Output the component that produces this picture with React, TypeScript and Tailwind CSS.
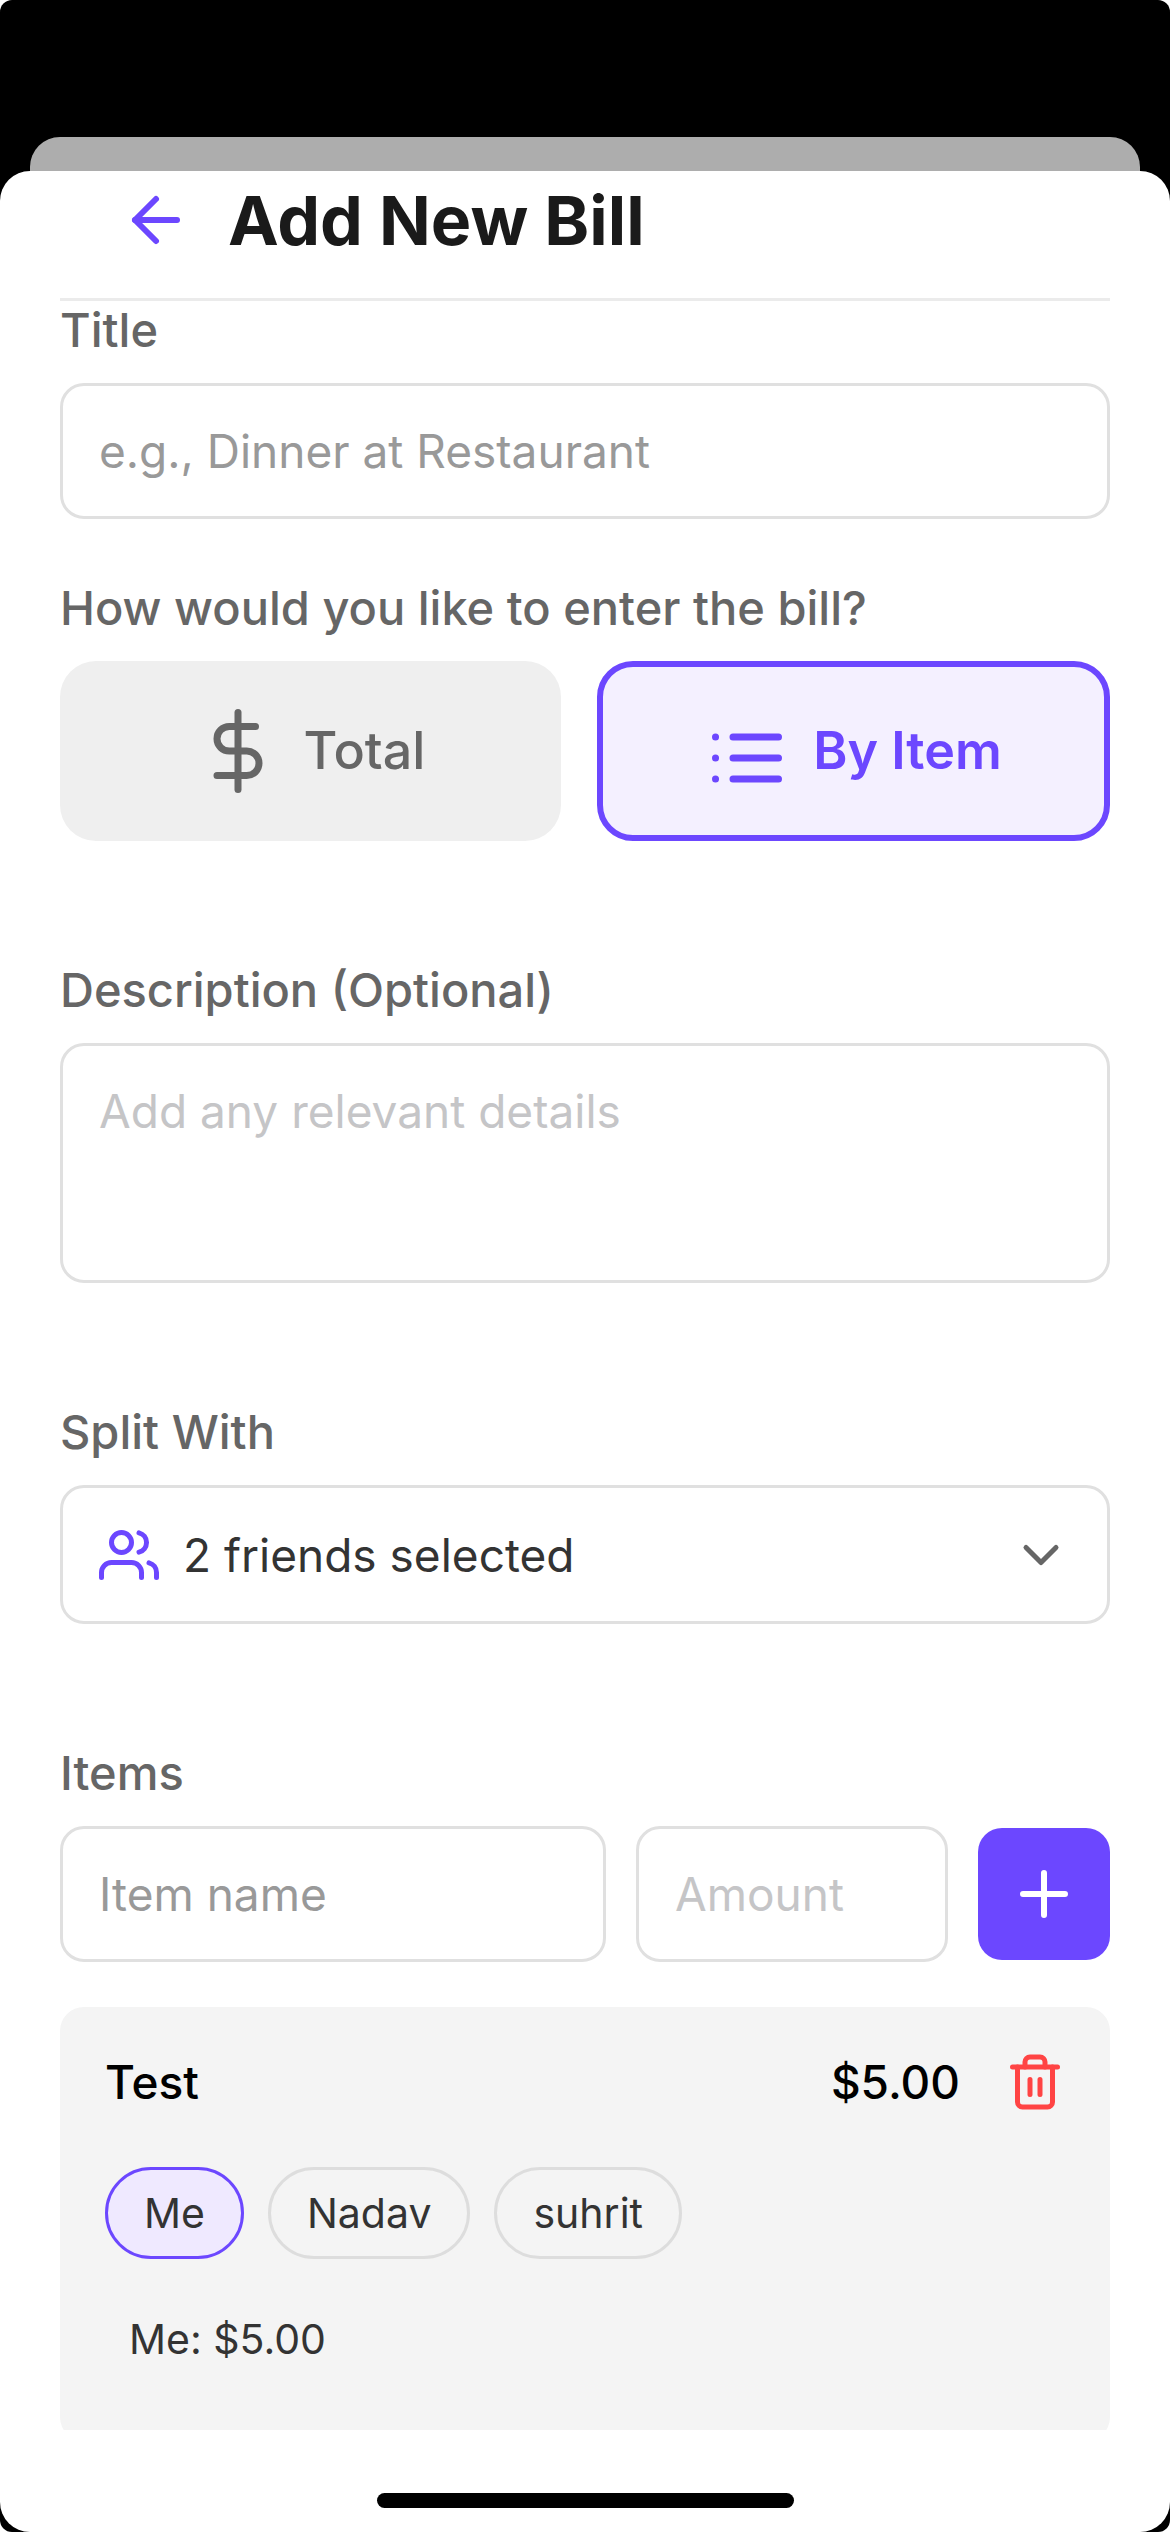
import { useState } from "react";
import type { ReactNode } from "react";

const labelClass = "block text-[47px] leading-[58px] font-medium text-[#666666]";
const fieldClass =
  "rounded-[24px] border-[3px] border-[#e0e0e0] bg-white px-9 py-9 text-[46px] leading-[58px] text-[#333333] outline-none";

function Icon({ className, children }: { className: string; children: ReactNode }) {
  return (
    <svg
      viewBox="0 0 24 24"
      fill="none"
      stroke="currentColor"
      strokeWidth="2"
      strokeLinecap="round"
      strokeLinejoin="round"
      aria-hidden="true"
      className={className}
    >
      {children}
    </svg>
  );
}

function ModeButton({
  active,
  onClick,
  label,
  children,
}: {
  active: boolean;
  onClick: () => void;
  label: string;
  children: ReactNode;
}) {
  return (
    <button
      type="button"
      aria-pressed={active}
      onClick={onClick}
      className={
        "flex h-[180px] flex-1 items-center justify-center gap-6 rounded-[36px] text-[52px] leading-[64px] " +
        (active
          ? "border-[6px] border-[#6c47ff] bg-[#f4f0ff] font-semibold text-[#6c47ff]"
          : "bg-[#efefef] font-medium text-[#666666]")
      }
    >
      <Icon className="size-[84px] shrink-0">{children}</Icon>
      <span>{label}</span>
    </button>
  );
}

export default function App() {
  const [mode, setMode] = useState<"total" | "item">("item");
  const [selected, setSelected] = useState("Me");

  return (
    <div className="h-screen bg-white font-['Inter',sans-serif]">
      <div className="flex h-full flex-col overflow-hidden rounded-[12px] bg-black pt-[137px]">
        <div className="mx-[30px] h-[34px] shrink-0 rounded-t-[30px] bg-[#adadad]" />
        <main className="flex min-h-0 flex-1 flex-col rounded-[30px] bg-white px-[60px]">
          <header className="flex shrink-0 items-center gap-9 border-b-[3px] border-[#ebebeb] px-[60px] pt-[13px] pb-[42px]">
            <button type="button" aria-label="Back" className="text-[#6c47ff]">
              <Icon className="size-[72px]">
                <path d="M19 12H5" />
                <path d="m12 19-7-7 7-7" />
              </Icon>
            </button>
            <h1 className="text-[68px] leading-[72px] font-bold text-[#1a1a1a]">Add New Bill</h1>
          </header>

          <form className="min-h-0 flex-1 overflow-hidden" onSubmit={(e) => e.preventDefault()}>
            <div className="mb-[60px]">
              <label htmlFor="title" className={labelClass + " mb-6"}>
                Title
              </label>
              <input
                id="title"
                type="text"
                placeholder="e.g., Dinner at Restaurant"
                className={fieldClass + " block h-[136px] w-full placeholder:text-[#999999]"}
              />
            </div>

            <div role="group" aria-labelledby="mode-label" className="mb-[120px]">
              <p id="mode-label" className={labelClass + " mb-6"}>
                How would you like to enter the bill?
              </p>
              <div className="flex gap-9">
                <ModeButton active={mode === "total"} onClick={() => setMode("total")} label="Total">
                  <path d="M12 1v22" />
                  <path d="M17 5H9.5a3.5 3.5 0 0 0 0 7h5a3.5 3.5 0 0 1 0 7H6" />
                </ModeButton>
                <ModeButton active={mode === "item"} onClick={() => setMode("item")} label="By Item">
                  <path d="M8 8h13M8 14h13M8 20h13" />
                  <path d="M3 8h.01M3 14h.01M3 20h.01" />
                </ModeButton>
              </div>
            </div>

            <div className="mb-[120px]">
              <label htmlFor="description" className={labelClass + " mb-6"}>
                Description (Optional)
              </label>
              <textarea
                id="description"
                placeholder="Add any relevant details"
                className={fieldClass + " block h-[240px] w-full resize-none placeholder:text-[#c5c5c7]"}
              />
            </div>

            <div className="mb-[120px]">
              <p id="split-label" className={labelClass + " mb-6"}>
                Split With
              </p>
              <button
                type="button"
                aria-haspopup="listbox"
                aria-describedby="split-label"
                className={fieldClass + " flex h-[139px] w-full items-center gap-6 text-left"}
              >
                <Icon className="size-[60px] shrink-0 text-[#6c47ff]">
                  <path d="M17 21v-2a4 4 0 0 0-4-4H5a4 4 0 0 0-4 4v2" />
                  <circle cx="9" cy="7" r="4" />
                  <path d="M23 21v-2a4 4 0 0 0-3-3.87" />
                  <path d="M16 3.13a4 4 0 0 1 0 7.75" />
                </Icon>
                <span className="flex-1">2 friends selected</span>
                <Icon className="size-[60px] shrink-0 text-[#666666]">
                  <path d="m6 9 6 6 6-6" />
                </Icon>
              </button>
            </div>

            <section aria-labelledby="items-label">
              <h2 id="items-label" className={labelClass + " mb-6"}>
                Items
              </h2>
              <div className="mb-[45px] flex items-center gap-[30px]">
                <input
                  type="text"
                  aria-label="Item name"
                  placeholder="Item name"
                  className={fieldClass + " h-[136px] min-w-0 flex-[2] placeholder:text-[#999999]"}
                />
                <input
                  type="text"
                  inputMode="decimal"
                  aria-label="Amount"
                  placeholder="Amount"
                  className={fieldClass + " h-[136px] min-w-0 flex-1 placeholder:text-[#c5c5c7]"}
                />
                <button
                  type="button"
                  aria-label="Add item"
                  className="flex size-[132px] shrink-0 items-center justify-center rounded-[24px] bg-[#6c47ff] text-white"
                >
                  <Icon className="size-[72px]">
                    <path d="M12 5v14M5 12h14" />
                  </Icon>
                </button>
              </div>

              <article className="rounded-[24px] bg-[#f4f4f4] px-[45px] pt-[45px] pb-[77px]">
                <div className="mb-[55px] flex items-center text-[46px] leading-[60px] font-medium text-black">
                  <h3 className="flex-1">Test</h3>
                  <span>$5.00</span>
                  <button type="button" aria-label="Delete item" className="ml-[45px] text-[#ff4444]">
                    <Icon className="size-[60px]">
                      <path d="M3 6h18" />
                      <path d="M19 6v14a2 2 0 0 1-2 2H7a2 2 0 0 1-2-2V6m3 0V4a2 2 0 0 1 2-2h4a2 2 0 0 1 2 2v2" />
                      <path d="M10 11v6M14 11v6" />
                    </Icon>
                  </button>
                </div>
                <div className="mb-[55px] flex flex-wrap gap-6">
                  {["Me", "Nadav", "suhrit"].map((name) => (
                    <button
                      key={name}
                      type="button"
                      aria-pressed={selected === name}
                      onClick={() => setSelected(name)}
                      className={
                        "h-[92px] rounded-full border-[3px] px-9 text-[41px] leading-[50px] text-[#333333] " +
                        (selected === name ? "border-[#6c47ff] bg-[#efe9ff]" : "border-[#dddddd]")
                      }
                    >
                      {name}
                    </button>
                  ))}
                </div>
                <p className="px-6 text-[41px] leading-[50px] text-[#333333]">{selected}: $5.00</p>
              </article>
            </section>
          </form>

          <footer className="flex h-[102px] shrink-0 items-end justify-center pb-6">
            <div className="h-[15px] w-[417px] rounded-full bg-black" />
          </footer>
        </main>
      </div>
    </div>
  );
}
